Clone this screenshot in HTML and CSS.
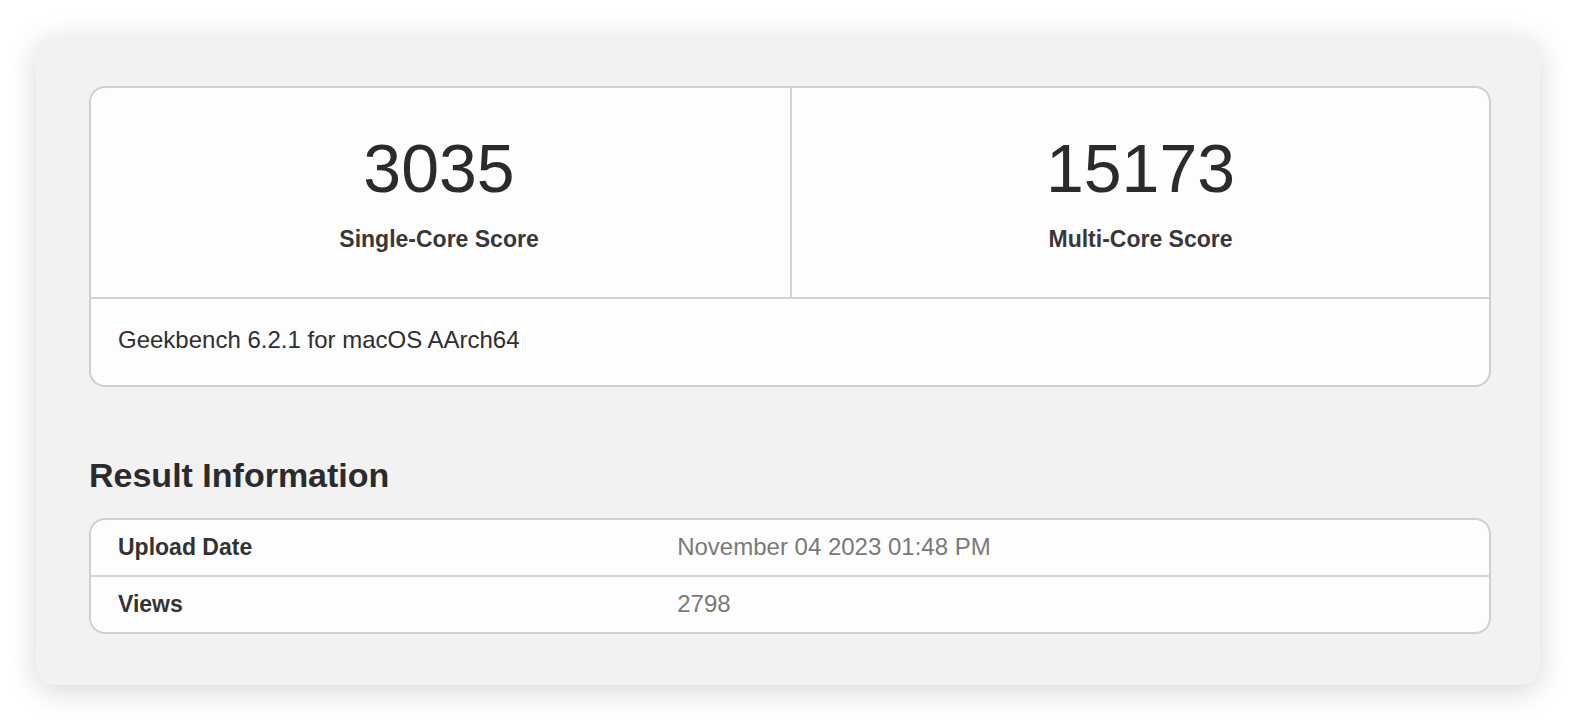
FILE: index.html
```html
<!DOCTYPE html>
<html lang="en">
<head>
    <meta charset="UTF-8">
    <meta name="viewport" content="width=device-width, initial-scale=1.0">
    <title>Geekbench 6 Result</title>
    <link rel="stylesheet" href="styles.css">
</head>
<body>

    <div class="panel">
        <div class="score-card">
            <div class="scores">
                <div class="score">
                    <div class="score-value">3035</div>
                    <div class="score-name">Single-Core Score</div>
                </div>
                <div class="score">
                    <div class="score-value">15173</div>
                    <div class="score-name">Multi-Core Score</div>
                </div>
            </div>
            <div class="score-footer">Geekbench 6.2.1 for macOS AArch64</div>
        </div>

        <h2>Result Information</h2>

        <div class="info-table">
            <div class="info-row">
                <div class="info-name">Upload Date</div>
                <div class="info-value">November 04 2023 01:48 PM</div>
            </div>
            <div class="info-row">
                <div class="info-name">Views</div>
                <div class="info-value">2798</div>
            </div>
        </div>
    </div>

</body>
</html>
```

FILE: styles.css
```css
body {
    font-family: "Liberation Sans", Arial, sans-serif;
    background: #fff;
    color: #2b2b2b;
    margin: 0;
    padding: 36px;
}

/* grey panel holding everything */
.panel {
    background: #f2f2f2;
    border-radius: 20px;
    box-shadow: 0 6px 30px rgba(0, 0, 0, 0.16);
    padding: 50px 49px 51px 53px;
}

/* scores box */
.score-card {
    background: #fdfdfd;
    border: 2px solid #cfcfcf;
    border-radius: 16px;
    overflow: hidden;
}

.scores {
    display: grid;
    grid-template-columns: 1fr 1fr;
    border-bottom: 2px solid #d4d4d4;
}

.score {
    text-align: center;
    padding: 47px 0 44px;
}

.score:first-child {
    padding-right: 3px;
}

.score + .score {
    border-left: 2px solid #d4d4d4;
}

.score-value {
    font-size: 68px;
    line-height: 67px;
    color: #2b2b2b;
}

.score-name {
    margin-top: 23px;
    font-size: 23px;
    line-height: 28px;
    font-weight: bold;
    color: #383838;
}

.score-footer {
    font-size: 24px;
    line-height: 28px;
    padding: 27px 27px 31px;
    color: #2f2f2f;
}

h2 {
    font-size: 34px;
    line-height: 40px;
    font-weight: bold;
    color: #2b2b2b;
    margin: 68px 0 23px;
}

/* key / value table */
.info-table {
    background: #fdfdfd;
    border: 2px solid #cfcfcf;
    border-radius: 16px;
    overflow: hidden;
}

.info-row {
    display: grid;
    grid-template-columns: 40% 60%;
    align-items: baseline;
}

.info-row + .info-row {
    border-top: 2px solid #d6d6d6;
}

.info-name,
.info-value {
    padding: 13px 27px 14px;
    line-height: 28px;
}

.info-name {
    font-size: 23px;
    font-weight: bold;
    color: #333;
}

.info-value {
    font-size: 24px;
    color: #7a7a7a;
}
```
